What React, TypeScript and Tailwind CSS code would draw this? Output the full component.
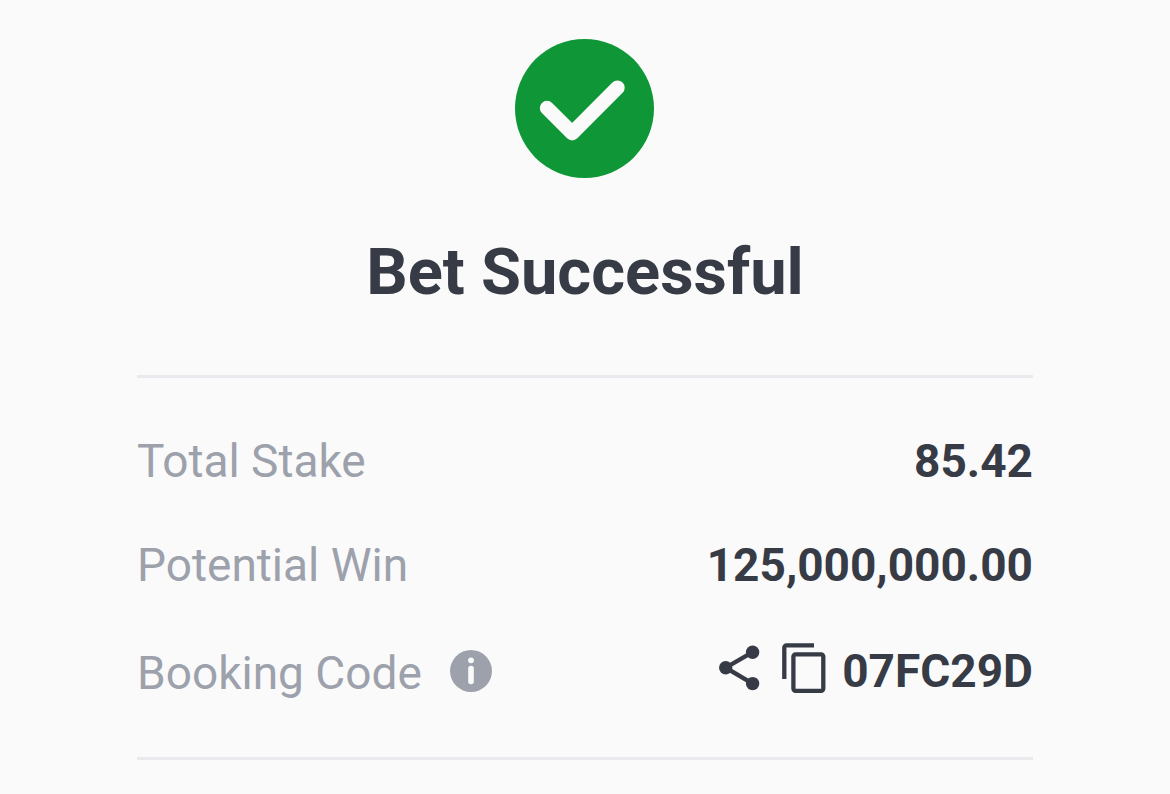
import React from 'react';

interface SummaryRowProps {
  label: string;
  value: string;
}

const SummaryRow: React.FC<SummaryRowProps> = ({ label, value }) => (
  <div className="flex items-center justify-between">
    <dt className="text-[#9ca1ab]">{label}</dt>
    <dd className="font-bold">{value}</dd>
  </div>
);

const SuccessIcon = () => (
  <svg viewBox="0 0 140 139" className="mx-auto h-[139px] w-[140px]" fill="none" aria-hidden="true">
    <circle cx="69.5" cy="69.5" r="69.5" fill="#0f9737" />
    <path d="M32 69 57.2 94.2l45.3-45.5" stroke="#fafafa" strokeWidth="14.4" strokeLinecap="round" strokeLinejoin="round" />
  </svg>
);

const InfoIcon = () => (
  <svg viewBox="0 0 42 42" className="h-[42px] w-[42px]" fill="none" aria-hidden="true">
    <circle cx="21" cy="21" r="21" fill="#9ca1ab" />
    <circle cx="21" cy="10.3" r="2.9" fill="#fafafa" />
    <path d="M21 18.5v13" stroke="#fafafa" strokeWidth="5.6" strokeLinecap="round" />
  </svg>
);

const ShareIcon = () => (
  <svg viewBox="0 0 41 50" className="h-[50px] w-[41px]" fill="currentColor" aria-hidden="true">
    <circle cx="6.7" cy="24.7" r="6.7" />
    <circle cx="33.6" cy="9.2" r="6.7" />
    <circle cx="33.6" cy="40.6" r="6.7" />
    <path d="M33.6 9.2 6.7 24.7l26.9 15.9" fill="none" stroke="currentColor" strokeWidth="4.4" />
  </svg>
);

const CopyIcon = () => (
  <svg viewBox="0 0 44 50" className="h-[50px] w-[44px]" fill="none" stroke="currentColor" strokeWidth="4.3" aria-hidden="true">
    <path d="M2.3 36V4.6a2.3 2.3 0 0 1 2.3-2.3H32" />
    <rect x="11.4" y="11.3" width="29.9" height="36.5" rx="2.2" />
  </svg>
);

const App: React.FC = () => {
  return (
    <main className="min-h-screen bg-[#fafafa] px-[137px] pt-[39px] pb-8 font-['Roboto',sans-serif] text-[#363b46]">
      <SuccessIcon />
      <h1 className="mt-[54px] text-center text-[65px] leading-[80px] font-bold">Bet Successful</h1>

      <dl className="mt-[63px] flex flex-col gap-12 border-y-3 border-[#e9eaed] pt-[55px] pb-14 text-[46px] leading-[56px]">
        <SummaryRow label="Total Stake" value="85.42" />
        <SummaryRow label="Potential Win" value="125,000,000.00" />
        <div className="flex items-center justify-between">
          <dt className="flex items-center gap-7 text-[#9ca1ab]">
            <span className="pt-1">Booking Code</span>
            <button type="button" aria-label="About the booking code">
              <InfoIcon />
            </button>
          </dt>
          <dd className="flex items-start font-bold">
            <button type="button" aria-label="Share booking code" className="mr-[22px]">
              <ShareIcon />
            </button>
            <button type="button" aria-label="Copy booking code" className="mr-4">
              <CopyIcon />
            </button>
            07FC29D
          </dd>
        </div>
      </dl>
    </main>
  );
};

export default App;
